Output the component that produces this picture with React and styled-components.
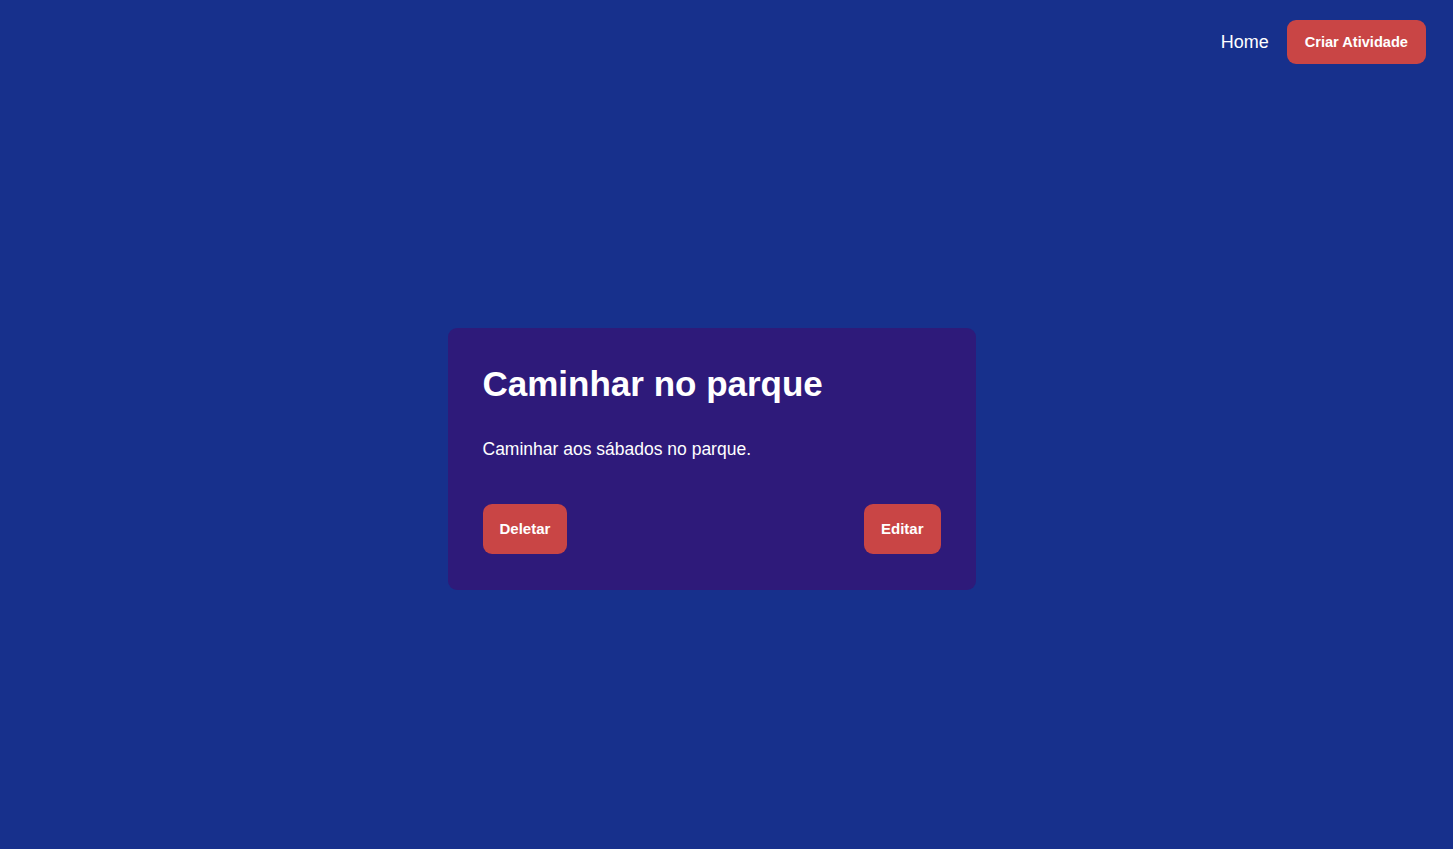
import React from 'react';
import styled, { createGlobalStyle } from 'styled-components';

const GlobalStyle = createGlobalStyle`
  * {
    box-sizing: border-box;
  }
  body {
    margin: 0;
    background-color: #17308c;
    font-family: "Liberation Sans", Arial, sans-serif;
    color: #ffffff;
  }
`;

const App = () => {
  return (
    <React.Fragment>
      <GlobalStyle />
      <Page>
        <Header>
          <NavLink href="#">Home</NavLink>
          <Button>Criar Atividade</Button>
        </Header>
        <Main>
          <Card>
            <Title>Caminhar no parque</Title>
            <Description>Caminhar aos sábados no parque.</Description>
            <Actions>
              <Button small>Deletar</Button>
              <Button small>Editar</Button>
            </Actions>
          </Card>
        </Main>
      </Page>
    </React.Fragment>
  );
};

const Page = styled.div`
  min-height: 100vh;
  display: flex;
  flex-direction: column;
`;

const Header = styled.header`
  display: flex;
  justify-content: flex-end;
  align-items: center;
  gap: 18px;
  padding: 20px 27px 0;
`;

const NavLink = styled.a`
  color: #ffffff;
  text-decoration: none;
  font-size: 18px;
`;

const Button = styled.button`
  border: none;
  background-color: #c94545;
  color: #ffffff;
  font-family: "Liberation Sans", Arial, sans-serif;
  font-weight: bold;
  font-size: ${(p) => (p.small ? '15px' : '14.6px')};
  border-radius: 9px;
  height: ${(p) => (p.small ? '50px' : '44px')};
  padding: 0 ${(p) => (p.small ? '17px' : '18px')};
  cursor: pointer;
`;

const Main = styled.main`
  flex: 1;
  display: flex;
  align-items: center;
  justify-content: center;
  padding: 4px 30px 0 0;
`;

const Card = styled.div`
  width: 528px;
  background-color: #2e1a7a;
  border-radius: 9px;
  padding: 35px 35px 36px;
`;

const Title = styled.h1`
  margin: 0;
  font-size: 35px;
  line-height: 42px;
  font-weight: bold;
`;

const Description = styled.p`
  margin: 33px 0 0;
  font-size: 17.5px;
  line-height: 22px;
`;

const Actions = styled.div`
  display: flex;
  justify-content: space-between;
  margin-top: 44px;
`;

export default App;
